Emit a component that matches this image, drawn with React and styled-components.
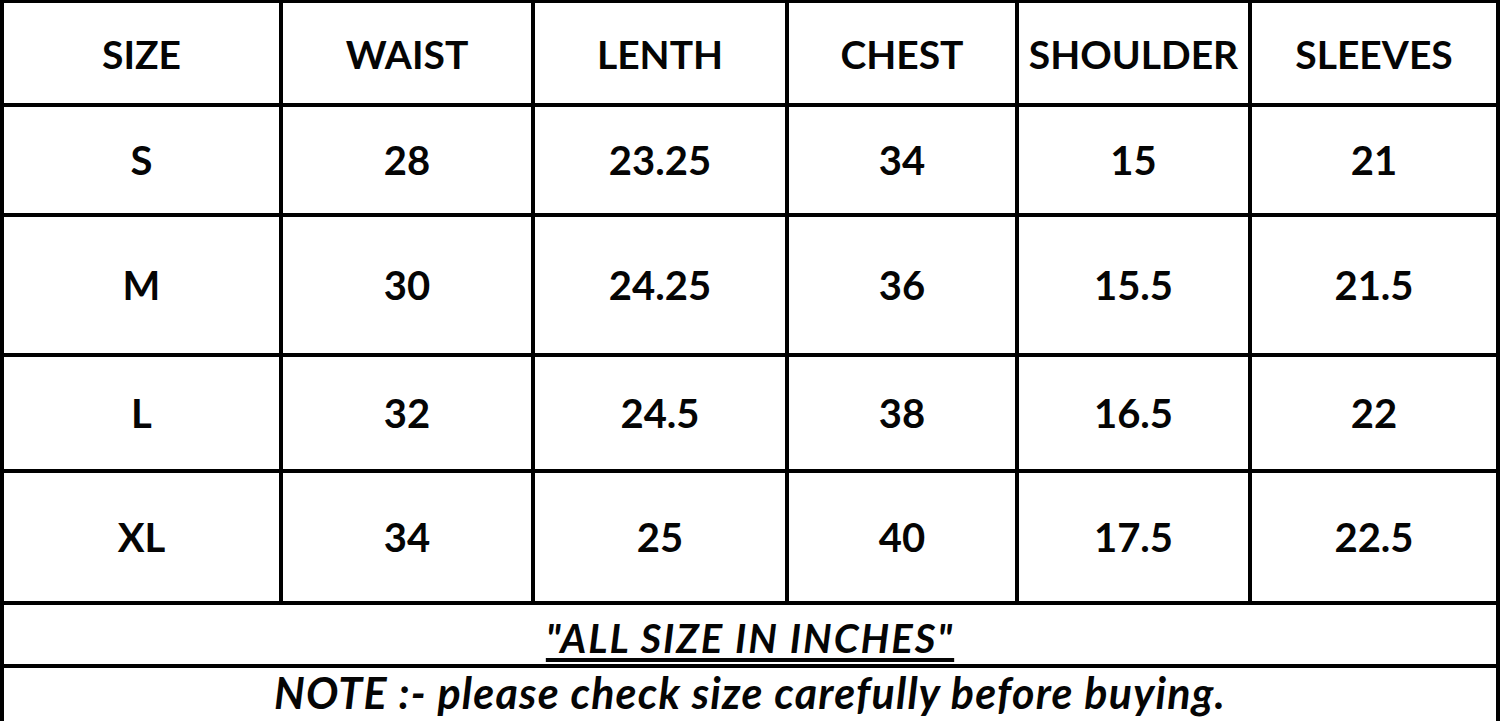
import React from "react";
import styled, { createGlobalStyle } from "styled-components";

const GlobalStyle = createGlobalStyle`
  html, body {
    margin: 0;
    padding: 0;
    background: #ffffff;
    overflow: hidden;
  }
  body {
    font-family: Lato, "Open Sans", sans-serif;
  }
`;

const Chart = styled.div`
  display: grid;
  width: 1500px;
  box-sizing: border-box;
  grid-template-columns: 275px 248px 250px 226px 229px 244px;
  grid-template-rows: 100px 106px 136px 112px 128px 59px 70px;
  gap: 4px;
  padding: 3px 4px 4px 4px;
  background: #000000;
`;

const Cell = styled.div`
  background: #ffffff;
  display: flex;
  align-items: center;
  justify-content: center;
  font-family: Lato, "Open Sans", sans-serif;
  font-weight: 700;
  font-size: ${(p) => (p.$head ? "39px" : "40px")};
  color: #050505;
  line-height: 1;
  padding-top: ${(p) => (p.$head ? "2px" : "0")};
`;

const WideCell = styled.div`
  grid-column: 1 / -1;
  background: #ffffff;
  display: flex;
  justify-content: center;
  align-items: ${(p) => (p.$top ? "flex-start" : "center")};
  padding-top: ${(p) => p.$pad};
  font-family: Lato, "Open Sans", sans-serif;
  font-weight: 700;
  font-style: italic;
  font-size: ${(p) => p.$size};
  letter-spacing: ${(p) => p.$spacing};
  color: #050505;
  line-height: 1;
`;

const Underlined = styled.span`
  text-decoration: underline;
  text-decoration-thickness: 4px;
  text-underline-offset: 5px;
`;

const headers = ["SIZE", "WAIST", "LENTH", "CHEST", "SHOULDER", "SLEEVES"];

const rows = [
  ["S", "28", "23.25", "34", "15", "21"],
  ["M", "30", "24.25", "36", "15.5", "21.5"],
  ["L", "32", "24.5", "38", "16.5", "22"],
  ["XL", "34", "25", "40", "17.5", "22.5"],
];

export default function App() {
  return (
    <>
      <GlobalStyle />
      <Chart>
        {headers.map((h) => (
          <Cell key={h} $head>
            {h}
          </Cell>
        ))}
        {rows.map((r) =>
          r.map((v, i) => <Cell key={r[0] + i}>{v}</Cell>)
        )}
        <WideCell $size="40px" $spacing="2px" $pad="6px">
          <Underlined>"ALL SIZE IN INCHES"</Underlined>
        </WideCell>
        <WideCell $size="43px" $spacing="1.2px" $pad="3px" $top>
          NOTE :- please check size carefully before buying.
        </WideCell>
      </Chart>
    </>
  );
}
